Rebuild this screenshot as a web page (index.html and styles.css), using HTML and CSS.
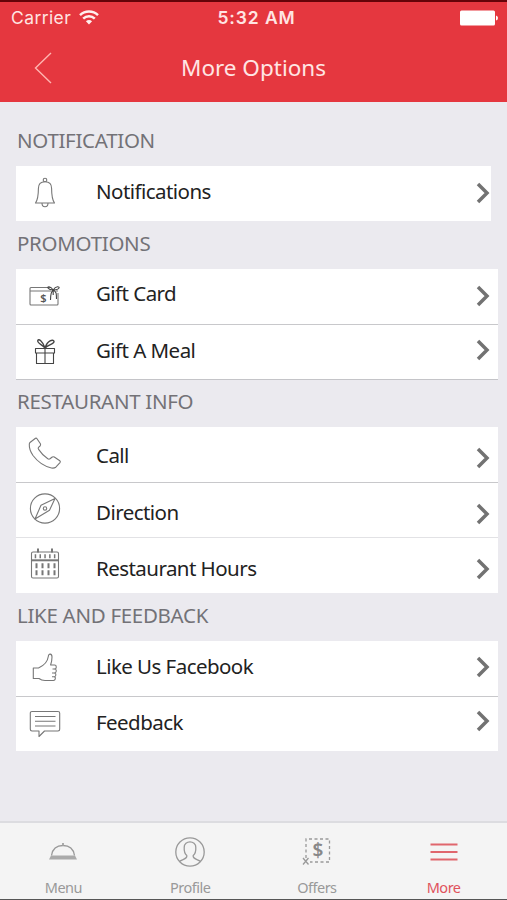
FILE: index.html
```html
<!DOCTYPE html>
<html lang="en">
<head>
  <meta charset="UTF-8" />
  <meta name="viewport" content="width=device-width, initial-scale=1.0"/>
  <title>More Options</title>
  <link rel="stylesheet" href="styles.css">
</head>
<body>
  <svg class="defs">
    <symbol id="chevron" viewBox="0 0 14 22"><path d="M2 2 L11 11 L2 20"/></symbol>
  </svg>

  <header>
    <div class="status">
      <div class="carrier">
        <span>Carrier</span>
        <svg class="wifi" width="20" height="15" viewBox="0 0 20 15">
          <path d="M1 5.2 A13 13 0 0 1 19 5.2"/>
          <path d="M4.2 8.6 A8.4 8.4 0 0 1 15.8 8.6"/>
          <path class="solid" d="M6.9 11.3 A4.6 4.6 0 0 1 13.1 11.3 L10 14.4 Z"/>
        </svg>
      </div>
      <div class="time">5:32 AM</div>
      <svg class="battery" width="38" height="16" viewBox="0 0 38 16">
        <rect width="35" height="15" y=".5" rx="1.5"/>
        <path d="M36 5.5 Q38 6 38 8 T36 10.5 Z"/>
      </svg>
    </div>
    <div class="nav">
      <svg class="back" width="18" height="32" viewBox="0 0 18 32"><path d="M17 1 L1.5 16 L17 31"/></svg>
      <h1>More Options</h1>
    </div>
  </header>

  <main>
    <!-- Notification -->
    <h2 class="first">NOTIFICATION</h2>
    <ul class="list narrow">
      <li>
        <svg class="icon raise" viewBox="0 0 34 34">
          <circle cx="17" cy="5" r="1.8"/>
          <path d="M17 6.8 C12 6.8 10.4 9.5 10.4 13.5 C10.4 21 10 24.5 7.5 28 H26.5 C24 24.5 23.6 21 23.6 13.5 C23.6 9.5 22 6.8 17 6.8 Z"/>
          <path d="M14 28 C14 33 20 33 20 28"/>
        </svg>
        <span class="label up">Notifications</span>
        <svg class="chevron"><use href="#chevron"/></svg>
      </li>
    </ul>

    <!-- Promotions -->
    <h2>PROMOTIONS</h2>
    <ul class="list shadow">
      <li>
        <svg class="icon" viewBox="0 0 34 34">
          <path d="M23 8.5 H3 Q2 8.5 2 9.5 V25 Q2 26 3 26 H29 Q30 26 30 25 V14"/>
          <path d="M2 12 H23 M28 12 H30"/>
          <path class="dark" d="M25.2 11 C22 6.5 19 7.5 20 9 C21 10.8 23.5 10.8 25.2 11 C28 6.5 32 7.5 31 9 C30 10.8 28 10.8 25.2 11 C23 12.5 22.5 15 22.5 21 M25.2 11 C28.5 12.5 28.5 15 28.5 20 M25.2 11 V16"/>
          <text class="dollar" x="12.2" y="22.5">$</text>
        </svg>
        <span class="label up-more">Gift Card</span>
        <svg class="chevron"><use href="#chevron"/></svg>
      </li>
      <li>
        <svg class="icon gift" viewBox="0 0 34 34">
          <path d="M7.5 13.5 H26.5 V18 H7.5 Z M8.5 18 H25.5 V28.5 H8.5 Z M17 13.5 V28.5"/>
          <path class="bow" d="M17 13 C14.5 5.5 10.5 3.5 9.8 5.5 C9 8.5 14.5 9.500 17 13 C19.5 5.5 25 4 26 6.3 C26.6 9 20 9.5 17 13 Z"/>
        </svg>
        <span class="label up">Gift A Meal</span>
        <svg class="chevron raise"><use href="#chevron"/></svg>
      </li>
    </ul>

    <!-- Restaurant Info -->
    <h2>RESTAURANT INFO</h2>
    <ul class="list">
      <li>
        <svg class="icon raise" viewBox="0 0 34 34">
          <path d="M2 6.5 L7.5 2.2 Q8.4 1.8 9 2.7 L12.4 7.7 Q13 9 12 10 L10.5 11.3 Q9.8 12.2 10.6 13.4 Q14.4 19.3 19.8 22.8 Q21 23.5 22 22.8 L24.3 21 Q25.3 20.5 26.3 21 L31.8 24.8 Q32.8 25.6 32 26.6 L27.8 31.2 Q26 32.5 23.5 32 Q12.5 29.5 5 19.5 Q1 13.5 1.3 8.2 Q1.3 7.1 2 6.5 Z"/>
        </svg>
        <span class="label">Call</span>
        <svg class="chevron lower"><use href="#chevron"/></svg>
      </li>
      <li>
        <svg class="icon raise" viewBox="0 0 34 34">
          <circle cx="17" cy="16.5" r="14.6"/>
          <circle cx="17" cy="16.5" r="1.7"/>
          <path d="M27 6.5 L21.5 18.2 L7 27 L13 13.2 Z"/>
        </svg>
        <span class="label down">Direction</span>
        <svg class="chevron lower"><use href="#chevron"/></svg>
      </li>
      <li class="light">
        <svg class="icon raise" viewBox="0 0 34 34">
          <rect x="3.5" y="5" width="27" height="26" rx="1.5"/>
          <path class="thick" d="M10 1.5 V5.5 M24 1.5 V5.5"/>
          <path class="thick" d="M3.5 13.3 H30.5"/>
          <path class="days" d="M6.7 9.3 H28"/>
          <path class="dates" d="M7.5 18.8 H28 M7.5 25.8 H28"/>
        </svg>
        <span class="label down">Restaurant Hours</span>
        <svg class="chevron lower"><use href="#chevron"/></svg>
      </li>
    </ul>

    <!-- Like and Feedback -->
    <h2>LIKE AND FEEDBACK</h2>
    <ul class="list">
      <li>
        <svg class="icon raise" viewBox="0 0 34 34">
          <path d="M5.3 18 H10.5 C15 16 19.5 12.5 20.3 6.5 C20.5 3 24 3.5 24 7 Q24 11 22.6 15 H26.5 C29 15 28.6 18.8 27 19 C29 19.5 28.5 22.5 26.8 23 C28.5 23.5 28 26.5 26.5 26.8 C28 27.5 27.5 30.5 25.5 30.5 H17 Q13.5 30.5 11 28.5 H5.3 Z"/>
          <path d="M24.5 19 H27 M24 23 H26.8 M24 26.8 H26.5"/>
        </svg>
        <span class="label up">Like Us Facebook</span>
        <svg class="chevron raise"><use href="#chevron"/></svg>
      </li>
      <li>
        <svg class="icon" viewBox="0 0 34 34">
          <path d="M4 4.5 H30 Q31.7 4.5 31.7 6.2 V22.3 Q31.7 24 30 24 H16.5 L11 29.5 V24 H4 Q2.3 24 2.3 22.3 V6.2 Q2.3 4.5 4 4.5 Z"/>
          <path d="M7 9.5 H27.5 M7 14.3 H27.5 M7 19 H27.5"/>
        </svg>
        <span class="label up">Feedback</span>
        <svg class="chevron raise-more"><use href="#chevron"/></svg>
      </li>
    </ul>
  </main>

  <footer>
    <div class="tab">
      <svg viewBox="0 0 32 32">
        <path d="M4.5 19.5 C5.5 13 10 9.5 16 9.5 S26.5 13 27.5 19.5"/>
        <path class="solid" d="M4 19.5 H28 L30 23.5 H2 Z M15 7 H17 V9.5 H15 Z"/>
      </svg>
      <span>Menu</span>
    </div>
    <div class="tab">
      <svg viewBox="0 0 32 32">
        <circle cx="16" cy="16" r="14.2"/>
        <path d="M5.5 25.5 C8 23 13.5 23.5 12.8 19.5 C10.5 17.5 10 15 10.2 11.5 C10 4 22 4 21.8 11.5 C22 15 21.5 17.5 19.2 19.5 C18.5 23.5 24 23 26.5 25.5"/>
      </svg>
      <span>Profile</span>
    </div>
    <div class="tab">
      <svg viewBox="0 0 32 32">
        <path class="dashed" d="M5 22 V3 H28.5 V26 H9"/>
        <path d="M2 22 L7.5 28.5 M7.5 22 L2 28.5"/>
        <text class="offer" x="17" y="20.5">$</text>
      </svg>
      <span>Offers</span>
    </div>
    <div class="tab active">
      <svg viewBox="0 0 32 32"><path d="M2.5 8.5 H29.5 M2.5 16 H29.5 M2.5 23.5 H29.5"/></svg>
      <span>More</span>
    </div>
  </footer>
</body>
</html>
```

FILE: styles.css
```css
* {
  box-sizing: border-box;
  margin: 0;
  padding: 0;
}
body {
  display: flex;
  flex-direction: column;
  height: 900px;
  font-family: 'Noto Sans', 'Open Sans', sans-serif;
  background: #ebeaef;
  color: #222;
  border-bottom: 1px solid #555;
  overflow: hidden;
}
svg {
  display: block;
  fill: none;
  flex-shrink: 0;
}
.defs {
  display: none;
}
header {
  height: 102px;
  background: #e5373f;
  border-top: 2px solid #650308;
  color: #ffe5e3;
}
.status {
  display: grid;
  grid-template-columns: 1fr auto 1fr;
  align-items: center;
  height: 31px;
  padding: 0 9px 0 11px;
  font-family: Inter, 'Liberation Sans', sans-serif;
  font-size: 17.5px;
  letter-spacing: 0.4px;
}
.carrier {
  display: flex;
  align-items: center;
  gap: 8px;
}
.wifi path {
  stroke: #fff0ee;
  stroke-width: 2.5;
}
.wifi .solid {
  fill: #fff0ee;
  stroke: none;
}
.time {
  padding-left: 4px;
  font-weight: 600;
  letter-spacing: 0.9px;
}
.battery {
  justify-self: end;
  fill: #fff;
}
.nav {
  display: grid;
  grid-template-columns: 1fr auto 1fr;
  align-items: center;
  height: 69px;
  padding-left: 34px;
}
.back {
  stroke: #ffb5b0;
  stroke-width: 1.4;
}
h1 {
  font-size: 22.5px;
  font-weight: 400;
  margin-right: 34px;
}
main {
  flex: 1;
  padding: 0 9px 0 16px;
}
h2 {
  height: 48px;
  padding-left: 1px;
  font-size: 20.5px;
  font-weight: 400;
  line-height: 45px;
  letter-spacing: -0.3px;
  color: #737277;
}
h2.first {
  height: 63.5px;
  line-height: 77px;
}
.list {
  list-style: none;
  background: #fff;
}
.list.narrow {
  margin-right: 7px;
}
.list li {
  display: flex;
  align-items: center;
  height: 55.2px;
  padding-left: 12px;
}
.list li + li {
  border-top: 1px solid #c8c8cb;
}
.list li.light {
  border-top-color: #e2e2e5;
}
.shadow {
  box-shadow: 0 1px #c4c4c8;
}
.icon {
  width: 34px;
  height: 34px;
  stroke: #777;
  stroke-width: 1.1;
  stroke-linejoin: round;
}
.gift, .dark {
  stroke: #444;
}
.bow {
  stroke-width: 1.4;
}
.thick {
  stroke-width: 2;
}
.days {
  stroke-width: 4;
  stroke-dasharray: 1.5 3.3;
}
.dates {
  stroke-width: 5;
  stroke-dasharray: 2 4;
}
.dollar {
  font-size: 11px;
  font-weight: 600;
  fill: #555;
  stroke: none;
}
.label {
  flex: 1;
  padding-left: 34px;
  font-size: 20.5px;
  letter-spacing: -0.55px;
  line-height: 28px;
}
.up { margin-bottom: 4px; }
.up-more { margin-bottom: 7px; }
.down { margin-top: 4px; }
.chevron {
  width: 14px;
  height: 22px;
  margin-right: 8px;
  stroke: #727272;
  stroke-width: 3.5;
}
.narrow .chevron {
  margin-right: 1px;
}
.raise { margin-bottom: 3px; }
.raise-more { margin-bottom: 5px; }
.lower { margin-top: 7px; }
footer {
  display: flex;
  height: 78px;
  background: #f4f4f4;
  border-top: 2px solid #dcdce0;
}
.tab {
  flex: 1;
  display: flex;
  flex-direction: column;
  align-items: center;
  padding-top: 13px;
  font-size: 14.5px;
  color: #999;
}
.tab svg {
  width: 32px;
  height: 32px;
  stroke: #999;
  stroke-width: 1.3;
}
.tab span {
  margin-top: 9px;
  line-height: 20px;
  letter-spacing: -0.5px;
}
.tab .solid {
  fill: #aaa;
  stroke: none;
}
.tab .dashed {
  stroke-dasharray: 3 2.5;
}
.offer {
  font-size: 19px;
  font-weight: 600;
  text-anchor: middle;
  fill: #888;
  stroke: none;
}
.tab.active {
  color: #e0525c;
}
.tab.active svg {
  stroke: #e0666d;
  stroke-width: 2;
}
```
